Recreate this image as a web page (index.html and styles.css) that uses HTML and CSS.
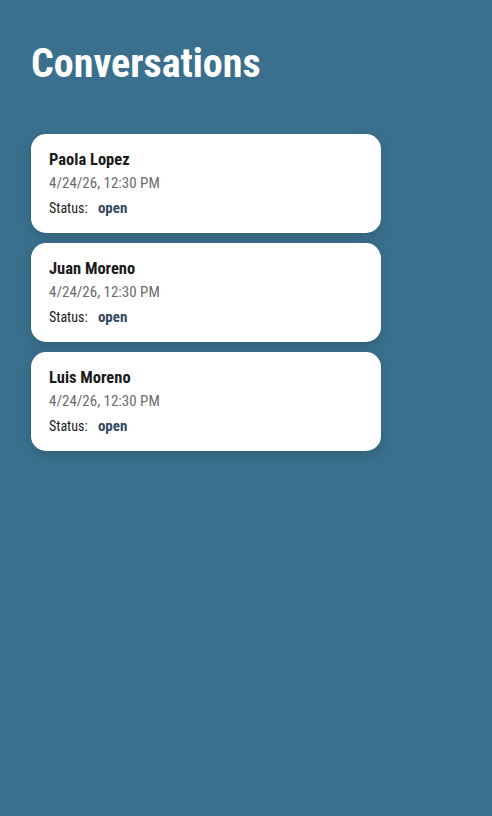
FILE: index.html
```html
<!DOCTYPE html>
<html lang="en">
<head>
  <meta charset="UTF-8">
  <meta name="viewport" content="width=device-width, initial-scale=1.0">
  <title>Conversations</title>
  <link rel="stylesheet" href="styles.css">
</head>
<body>

  <div class="page">
    <h1 class="title">Conversations</h1>

    <div class="list">
      <div class="card">
        <div class="name">Paola Lopez</div>
        <div class="date">4/24/26, 12:30 PM</div>
        <div class="status">Status: <span class="status-value">open</span></div>
      </div>
      <div class="card">
        <div class="name">Juan Moreno</div>
        <div class="date">4/24/26, 12:30 PM</div>
        <div class="status">Status: <span class="status-value">open</span></div>
      </div>
      <div class="card">
        <div class="name">Luis Moreno</div>
        <div class="date">4/24/26, 12:30 PM</div>
        <div class="status">Status: <span class="status-value">open</span></div>
      </div>
    </div>
  </div>

</body>
</html>
```

FILE: styles.css
```css
/* General Styles */
body {
  margin: 0;
  min-height: 100vh;
  background: #3a708d;
  font-family: 'Roboto', sans-serif;
  font-stretch: condensed;
}

.page {
  padding: 40px 31px;
}

.title {
  margin: 0 0 46px;
  color: #fff;
  font-size: 40px;
  font-weight: 700;
  line-height: 48px;
}

/* Conversation cards */
.list {
  display: flex;
  flex-direction: column;
  gap: 10px;
  width: 350px;
}

.card {
  background: #fff;
  border-radius: 15px;
  padding: 16px 18px 15px;
  box-shadow: 0 4px 12px rgba(0, 0, 0, 0.15);
}

.name {
  color: #1b1b1b;
  font-size: 16.5px;
  font-weight: 700;
  line-height: 20px;
}

.date {
  margin-top: 2px;
  color: #6b6b6b;
  font-size: 15px;
  line-height: 22px;
}

.status {
  margin-top: 4px;
  color: #1b1b1b;
  font-size: 14px;
  line-height: 20px;
}

.status-value {
  margin-left: 7px;
  color: #34495e;
  font-size: 15px;
  font-weight: 700;
}
```
